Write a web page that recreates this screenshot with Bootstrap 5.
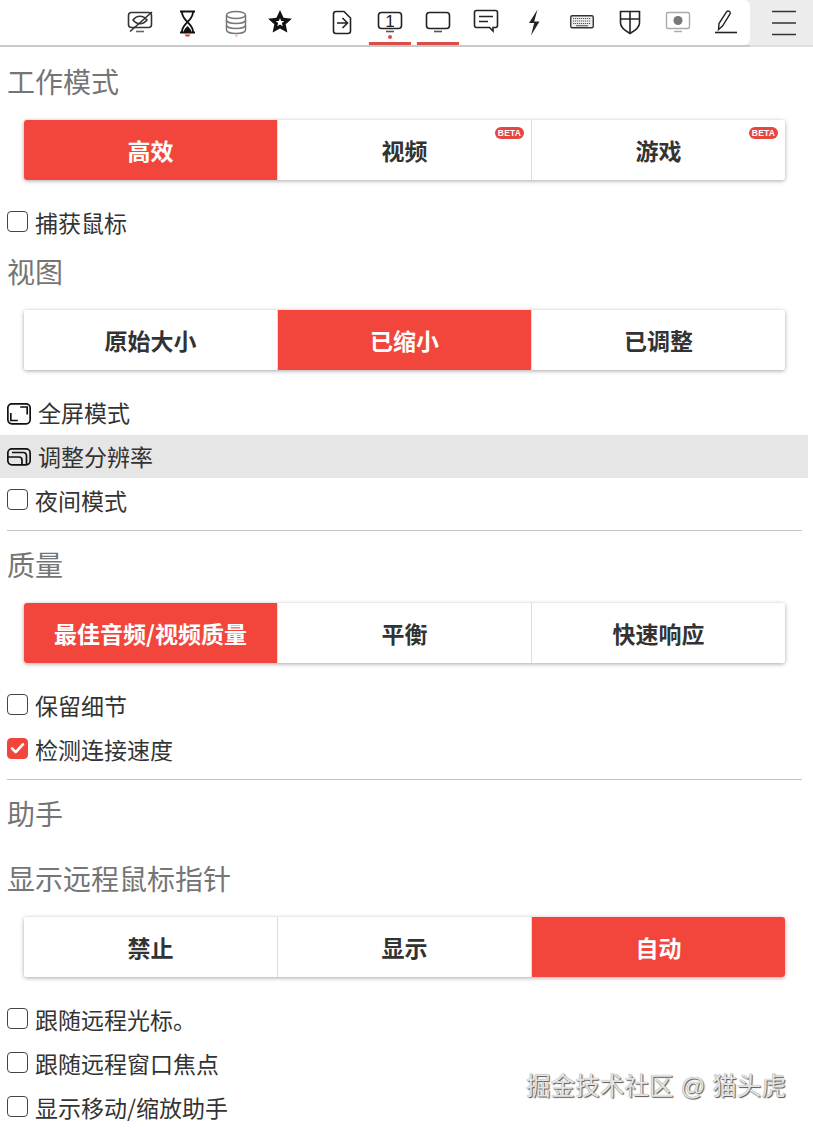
<!DOCTYPE html>
<html lang="zh-CN">
<head>
    <meta charset="UTF-8">
    <meta name="viewport" content="width=device-width, initial-scale=1.0">
    <title>工作模式</title>
    <link href="https://cdn.jsdelivr.net/npm/bootstrap@5.3.0/dist/css/bootstrap.min.css" rel="stylesheet">
    <style>
        html, body {
            height: 100%;
            overflow: hidden;
        }
        body {
            position: relative;
            font-family: "Noto Sans CJK SC", "Liberation Sans", sans-serif;
            color: #333;
            background: #fff;
        }
        .tool-bar {
            height: 47px;
            background: #ececec;
            border-bottom: 2px solid #c9c9c9;
        }
        .tool-strip {
            flex: 1 1 auto;
            height: 45px;
            background: #fff;
            border-radius: 0 6px 6px 0;
        }
        .tool-slot {
            position: relative;
            width: 48px;
            height: 45px;
            padding: 7px 9px 0;
        }
        .tool-slot svg {
            display: block;
            overflow: visible;
        }
        .tool-slot.is-star {
            width: 40px;
            padding-left: 5px;
            padding-right: 5px;
        }
        .tool-slot.is-on::after {
            content: "";
            position: absolute;
            left: 3px;
            right: 3px;
            bottom: 0;
            height: 3px;
            background: #dc4c48;
        }
        .tool-menu {
            width: 63px;
            height: 47px;
            padding-left: 4px;
            border-bottom: 2px solid #dedede;
        }
        .sheet {
            width: 808px;
            padding-top: 9px;
        }
        .sect-title {
            height: 54px;
            line-height: 50px;
            margin: 0;
            padding-left: 7px;
            font-size: 28px;
            font-weight: 400;
            color: #757575;
        }
        .sect-title.is-sub {
            margin-top: 11px;
        }
        .seg-group {
            margin: 10px 23px 22px 24px;
            height: 60px;
            border-radius: 3px;
            box-shadow: 0 1px 4px rgba(0, 0, 0, .35);
            background: #fff;
        }
        .seg-group .btn {
            position: relative;
            flex: 1 1 0;
            border: 0;
            border-left: 1px solid #ddd;
            border-radius: 0;
            padding: 0;
            font-size: 23px;
            font-weight: 700;
            color: #333;
            background: #fff;
        }
        .seg-group .btn:first-child {
            border-left: 0;
            border-radius: 3px 0 0 3px;
        }
        .seg-group .btn:last-child {
            border-radius: 0 3px 3px 0;
        }
        .seg-group .btn.seg-on {
            color: #fff;
            background: #f2463d;
            background-clip: padding-box;
        }
        .seg-group .btn .beta-tag {
            position: absolute;
            top: 7px;
            right: 7px;
            width: 29px;
            height: 12px;
            padding: 0;
            line-height: 12px;
            font-family: "Liberation Sans", sans-serif;
            font-size: 8.5px;
            font-weight: 700;
            letter-spacing: .2px;
            background: #e5473f;
            color: #fff;
        }
        .opt-row {
            height: 44px;
            padding-left: 7px;
            padding-bottom: 4px;
            font-size: 23px;
            line-height: 1.4;
            color: #333;
        }
        .opt-row.is-hover {
            height: 43px;
            margin-top: -1px;
            margin-bottom: 2px;
            padding-bottom: 1px;
            background: #e6e6e6;
        }
        .opt-row .form-check-input {
            flex: none;
            width: 21px;
            height: 21px;
            margin: 0 7px 1px 0;
            border: 1.5px solid #444;
            border-radius: 4px;
            box-shadow: none;
        }
        .opt-row .form-check-input:checked {
            background-color: #f2463d;
            border-color: #f2463d;
            background-image: url("data:image/svg+xml,%3csvg xmlns='http://www.w3.org/2000/svg' viewBox='0 0 21 21'%3e%3cpath fill='none' stroke='%23fff' stroke-width='3' stroke-linecap='round' stroke-linejoin='round' d='M4.500 10.500l4 4 8-8.500'/%3e%3c/svg%3e");
        }
        .opt-row svg {
            flex: none;
            margin-top: 4px;
            margin-right: 7px;
        }
        .opt-row.is-hover svg {
            margin-top: 1px;
        }
        .sect-line {
            margin: 6px 6px 8px 7px;
            border: 0;
            border-top: 1px solid #c4c4c4;
            opacity: 1;
        }
        .mark-text {
            position: absolute;
            left: 526px;
            top: 1071px;
            font-family: "Liberation Sans", "Noto Sans CJK SC", sans-serif;
            font-size: 24.6px;
            line-height: 32px;
            white-space: nowrap;
            color: #e4e4e4;
            text-shadow: 1px 1px 1px #555, 0 0 1px #888;
        }
    </style>
</head>
<body>
    <div class="tool-bar d-flex">
        <div class="tool-strip d-flex justify-content-end">
            <div class="d-flex me-auto">
                <div class="tool-slot" style="margin-left:116px">
                    <svg width="30" height="30" viewBox="0 0 30 30" fill="none" stroke="#333" stroke-width="1.600">
                        <rect x="3.500" y="5.500" width="23" height="15" rx="3"/>
                        <path d="M8 13c4-5 10-5 14 0-4 5-10 5-14 0z"/>
                        <path d="M5 24.500 27 5"/>
                        <path d="M11 24.500h8" stroke="#666"/>
                    </svg>
                </div>
                <div class="tool-slot">
                    <svg width="30" height="30" viewBox="0 0 30 30" fill="none" stroke="#111" stroke-width="1.800">
                        <path d="M7 4.500h15M7 25.500h15"/>
                        <path d="M9 5c0 5 3 7 5.500 10-2.500 3-5.500 5-5.500 10M20 5c0 5-3 7-5.500 10 2.500 3 5.500 5 5.500 10"/>
                        <path d="M10.500 25c.5-2.500 2-4 4-6 2 2 3.500 3.500 4 6z" fill="#111" stroke="none"/>
                        <path d="M11.500 27.500h6l-1.500 2h-3z" fill="#e23b3b" stroke="none"/>
                    </svg>
                </div>
                <div class="tool-slot">
                    <svg width="30" height="30" viewBox="0 0 30 30" fill="none" stroke="#777" stroke-width="1.500">
                        <ellipse cx="15" cy="8" rx="9.500" ry="3.500"/>
                        <path d="M5.500 8v15c0 2 4 3.500 9.500 3.500s9.500-1.500 9.500-3.500V8"/>
                        <path d="M5.500 13c0 2 4 3.500 9.500 3.500s9.500-1.500 9.500-3.500M5.500 18c0 2 4 3.500 9.500 3.500s9.500-1.500 9.500-3.500"/>
                        <circle cx="15.500" cy="28.500" r="1.500" fill="#f3c3c8" stroke="none"/>
                    </svg>
                </div>
                <div class="tool-slot is-star">
                    <svg width="30" height="30" viewBox="0 0 30 30">
                        <path d="M15 3 18.530 10.650 26.890 11.640 20.710 17.350 22.350 25.610 15 21.500 7.650 25.610 9.290 17.350 3.110 11.640 11.470 10.650z" fill="#111"/>
                        <path d="M15 11 16.180 13.880 19.280 14.110 16.900 16.120 17.650 19.140 15 17.500 12.350 19.140 13.100 16.120 10.720 14.110 13.820 13.880z" fill="#fff"/>
                    </svg>
                </div>
            </div>
            <div class="tool-slot">
                <svg width="30" height="30" viewBox="0 0 30 30" fill="none" stroke="#222" stroke-width="1.600">
                    <path d="M9 4.500h8l6.500 6.500v13c0 1.500-1 2.500-2.500 2.500H9c-1.500 0-2.500-1-2.500-2.500V7C6.500 5.500 7.500 4.500 9 4.500z"/>
                    <path d="M10 16h10M15.500 11l5 5-5 5"/>
                </svg>
            </div>
            <div class="tool-slot is-on">
                <svg width="30" height="30" viewBox="0 0 30 30" fill="none" stroke="#222" stroke-width="1.600">
                    <rect x="3.500" y="5.500" width="23" height="16" rx="3"/>
                    <text x="15" y="19.800" text-anchor="middle" font-family="Liberation Sans, sans-serif" font-size="17" fill="#222" stroke="none">1</text>
                    <path d="M11 24.500h8" stroke="#555"/>
                    <circle cx="15" cy="30" r="2" fill="#dc4c48" stroke="none"/>
                </svg>
            </div>
            <div class="tool-slot is-on">
                <svg width="30" height="30" viewBox="0 0 30 30" fill="none" stroke="#222" stroke-width="1.600">
                    <rect x="3.500" y="5.500" width="23" height="16" rx="3"/>
                    <path d="M11 24.500h8" stroke="#555"/>
                </svg>
            </div>
            <div class="tool-slot">
                <svg width="30" height="30" viewBox="0 0 30 30" fill="none" stroke="#222" stroke-width="1.600">
                    <path d="M5.500 3.500h19c1.200 0 2 .8 2 2v13c0 1.200-.8 2-2 2h-2.500v3.500l-3.500-3.500h-13c-1.200 0-2-.8-2-2v-13c0-1.200.8-2 2-2z"/>
                    <path d="M8 9.500h14M8 14.500h9"/>
                </svg>
            </div>
            <div class="tool-slot">
                <svg width="30" height="30" viewBox="0 0 30 30">
                    <path d="M18.500 2.500 10 16h5.200L12 28.500 20.500 14.500h-5.300z" fill="#222"/>
                </svg>
            </div>
            <div class="tool-slot">
                <svg width="30" height="30" viewBox="0 0 30 30" fill="none">
                    <rect x="3.750" y="8.750" width="22.500" height="12" rx="1.500" fill="#eee" stroke="#333" stroke-width="1.400"/>
                    <path d="M6 11.500h18M6 14h18M6 16.500h18" stroke="#555" stroke-width="1.100" stroke-dasharray="1.200 .8"/>
                    <path d="M9 18.700h12" stroke="#666" stroke-width="1.200"/>
                </svg>
            </div>
            <div class="tool-slot">
                <svg width="30" height="30" viewBox="0 0 30 30" fill="none" stroke="#222" stroke-width="1.600">
                    <path d="M5.500 4.500h19V16c0 5-5 8-9.500 10.500C10.500 24 5.500 21 5.500 16z"/>
                    <path d="M15 4.500v22M5.500 12h19"/>
                </svg>
            </div>
            <div class="tool-slot">
                <svg width="30" height="30" viewBox="0 0 30 30" fill="none" stroke="#aaa" stroke-width="1.400">
                    <rect x="3.500" y="5.500" width="23" height="16" rx="1.500"/>
                    <circle cx="15" cy="13.500" r="4.500" fill="#777" stroke="none"/>
                    <path d="M11 24.500h8"/>
                </svg>
            </div>
            <div class="tool-slot">
                <svg width="30" height="30" viewBox="0 0 30 30" fill="none" stroke="#222" stroke-width="1.400">
                    <path d="M7.500 22.500l.5-6L15.500 5c.6-1 1.800-1.300 2.800-.7s1.200 1.800.6 2.800L11.500 19z"/>
                    <path d="M4 25.500h22" stroke-width="1.600"/>
                </svg>
            </div>
        </div>
        <div class="tool-menu d-flex align-items-center justify-content-center">
            <svg width="26" height="30" viewBox="0 0 26 30" stroke="#333" stroke-width="1.600">
                <path d="M1 3.500h24M1 15h24M1 26.500h24"/>
            </svg>
        </div>
    </div>

    <div class="sheet">
        <h2 class="sect-title">工作模式</h2>
        <div class="seg-group d-flex">
            <button type="button" class="btn seg-on">高效</button>
            <button type="button" class="btn">视频<span class="badge rounded-pill beta-tag">BETA</span></button>
            <button type="button" class="btn">游戏<span class="badge rounded-pill beta-tag">BETA</span></button>
        </div>
        <label class="opt-row d-flex align-items-center">
            <input class="form-check-input" type="checkbox">捕获鼠标
        </label>

        <h2 class="sect-title">视图</h2>
        <div class="seg-group d-flex">
            <button type="button" class="btn">原始大小</button>
            <button type="button" class="btn seg-on">已缩小</button>
            <button type="button" class="btn">已调整</button>
        </div>
        <div class="opt-row d-flex align-items-center">
            <svg width="24" height="22" viewBox="0 0 24 22" fill="none" stroke="#111" stroke-width="1.700">
                <rect x=".85" y=".85" width="22.300" height="20" rx="4"/>
                <path d="M3.800 10v7.500h7M20.200 11.500V4h-7"/>
            </svg>
            全屏模式
        </div>
        <div class="opt-row is-hover d-flex align-items-center">
            <svg width="24" height="22" viewBox="0 0 24 22" fill="none" stroke="#111" stroke-width="1.700">
                <rect x=".85" y="2.850" width="22.300" height="16" rx="4"/>
                <path d="M1 11h11c2 0 3 1 3 3v4.500M5 6.500h11c2 0 3.500 1.500 3.500 3.500v8"/>
            </svg>
            调整分辨率
        </div>
        <label class="opt-row d-flex align-items-center">
            <input class="form-check-input" type="checkbox">夜间模式
        </label>
        <hr class="sect-line">

        <h2 class="sect-title">质量</h2>
        <div class="seg-group d-flex">
            <button type="button" class="btn seg-on">最佳音频/视频质量</button>
            <button type="button" class="btn">平衡</button>
            <button type="button" class="btn">快速响应</button>
        </div>
        <label class="opt-row d-flex align-items-center">
            <input class="form-check-input" type="checkbox">保留细节
        </label>
        <label class="opt-row d-flex align-items-center">
            <input class="form-check-input" type="checkbox" checked>检测连接速度
        </label>
        <hr class="sect-line">

        <h2 class="sect-title">助手</h2>
        <h2 class="sect-title is-sub">显示远程鼠标指针</h2>
        <div class="seg-group d-flex">
            <button type="button" class="btn">禁止</button>
            <button type="button" class="btn">显示</button>
            <button type="button" class="btn seg-on">自动</button>
        </div>
        <label class="opt-row d-flex align-items-center">
            <input class="form-check-input" type="checkbox">跟随远程光标。
        </label>
        <label class="opt-row d-flex align-items-center">
            <input class="form-check-input" type="checkbox">跟随远程窗口焦点
        </label>
        <label class="opt-row d-flex align-items-center">
            <input class="form-check-input" type="checkbox">显示移动/缩放助手
        </label>
    </div>

    <div class="mark-text">掘金技术社区 @ 猫头虎</div>

    <script src="https://cdn.jsdelivr.net/npm/bootstrap@5.3.0/dist/js/bootstrap.bundle.min.js"></script>
</body>
</html>
